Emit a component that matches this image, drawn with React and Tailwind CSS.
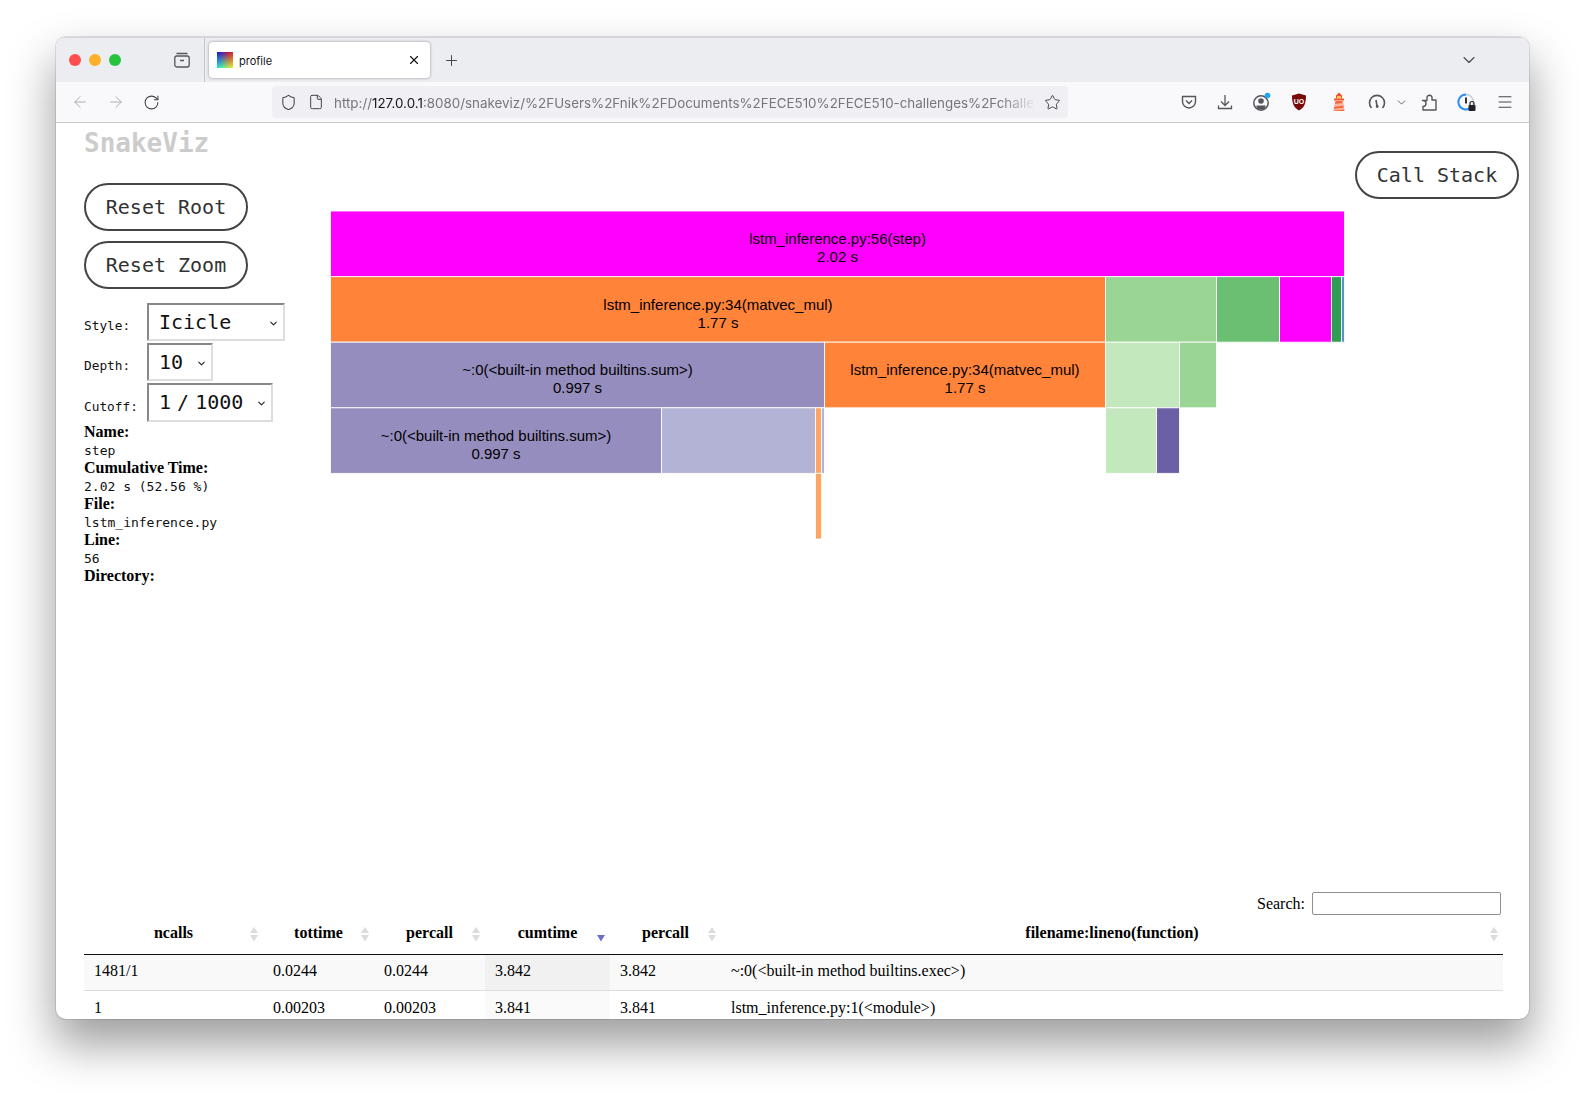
import React from 'react';
import {ArrowLeft, ArrowRight, ChevronDown, File, Menu, Plus, RotateCw, Shield, Star, X} from "lucide-react";

const rows = [
    {x: 330.5, w: 1014, y: 0, fill: "#ff00ff", label: "lstm_inference.py:56(step)", time: "2.02 s"},
    {x: 330.5, w: 775, y: 1, fill: "#ff8339", label: "lstm_inference.py:34(matvec_mul)", time: "1.77 s"},
    {x: 1105.5, w: 111, y: 1, fill: "#9bd595"},
    {x: 1216.5, w: 63, y: 1, fill: "#6bbf72"},
    {x: 1279.5, w: 52, y: 1, fill: "#ff00ff"},
    {x: 1331.5, w: 10, y: 1, fill: "#2f9e52"},
    {x: 1341.5, w: 3, y: 1, fill: "#5b93c8"},
    {x: 330.5, w: 494, y: 2, fill: "#958dbd", label: "~:0(<built-in method builtins.sum>)", time: "0.997 s"},
    {x: 824.5, w: 281, y: 2, fill: "#ff8339", label: "lstm_inference.py:34(matvec_mul)", time: "1.77 s"},
    {x: 1105.5, w: 74, y: 2, fill: "#c3e8bd"},
    {x: 1179.5, w: 37, y: 2, fill: "#9bd595"},
    {x: 330.5, w: 331, y: 3, fill: "#958dbd", label: "~:0(<built-in method builtins.sum>)", time: "0.997 s"},
    {x: 661.5, w: 154, y: 3, fill: "#b3b3d5"},
    {x: 815.5, w: 6, y: 3, fill: "#ffa564"},
    {x: 821.5, w: 3, y: 3, fill: "#b3b3d5"},
    {x: 1105.5, w: 51, y: 3, fill: "#c3e8bd"},
    {x: 1156.5, w: 23, y: 3, fill: "#6b60a6"},
    {x: 815.5, w: 6, y: 4, fill: "#ffa564"},
];

const columns = [
    {name: "ncalls", w: "w-[179px]"},
    {name: "tottime", w: "w-[111px]"},
    {name: "percall", w: "w-[111px]"},
    {name: "cumtime", w: "w-[125px]", active: true},
    {name: "percall", w: "w-[111px]"},
    {name: "filename:lineno(function)", w: "w-auto"},
];

const stats = [
    ["1481/1", "0.0244", "0.0244", "3.842", "3.842", "~:0(<built-in method builtins.exec>)"],
    ["1", "0.00203", "0.00203", "3.841", "3.841", "lstm_inference.py:1(<module>)"],
];

const info = [
    ["Name:", "step"],
    ["Cumulative Time:", "2.02 s (52.56 %)"],
    ["File:", "lstm_inference.py"],
    ["Line:", "56"],
    ["Directory:", ""],
];

const RowHeight = 65.6;

const Icicle = () => (
    <svg width="1016" height="332" className="block">
        {rows.map((r, i) => {
            const left = r.x - 330;
            const top = 1 + r.y * RowHeight;
            return (
                <g key={i}>
                    <rect x={left} y={top} width={r.w} height={RowHeight} fill={r.fill} stroke="#ffffff" strokeOpacity="0.85"/>
                    {r.label &&
                        <text x={left + r.w / 2} textAnchor="middle" fontSize="15" fill="#000" className="font-['Liberation_Sans',sans-serif]">
                            <tspan x={left + r.w / 2} y={top + 33}>{r.label}</tspan>
                            <tspan x={left + r.w / 2} y={top + 51}>{r.time}</tspan>
                        </text>}
                </g>
            );
        })}
    </svg>
);

const PillButton = ({children, className}) => (
    <button className={"block w-[164px] h-[48px] rounded-full border-2 border-[#444] text-[20px] text-[#333] bg-white " + className}>{children}</button>
);

const FakeSelect = ({label, value, className, textClass, mt}) => (
    <div className={"flex items-center " + mt}>
        <div className="w-[63px] mt-[8px] text-[12.8px] text-[#111]">{label}</div>
        <div className={"flex items-center justify-between pl-[10px] pr-[4px] border-2 border-t-[#888] border-l-[#888] border-r-[#ddd] border-b-[#ddd] text-[20px] text-[#111] pb-[1px] " + className}>
            <span className={textClass}>{value}</span>
            <ChevronDown size={11} strokeWidth={2.4} className="mt-[3px] text-[#222]"/>
        </div>
    </div>
);

const SortIcon = ({active}) => (
    <svg width="10" height="16" viewBox="0 0 10 16" className="justify-self-end mt-[2px]">
        {!active && <path d="M5 1 L9 7 L1 7 Z" fill="#dcdcdc"/>}
        <path d="M1 9 L9 9 L5 15.5 Z" fill={active ? "#6a6fd0" : "#dcdcdc"}/>
    </svg>
);

const Favicon = () => (
    <svg width="16" height="16" viewBox="0 0 16 16" className="shrink-0">
        <defs>
            <linearGradient id="favTop" x1="0" y1="0" x2="1" y2="0">
                <stop offset="0" stopColor="#1018e8"/>
                <stop offset="1" stopColor="#f01818"/>
            </linearGradient>
            <linearGradient id="favBottom" x1="0" y1="0" x2="1" y2="0">
                <stop offset="0" stopColor="#10f0e0"/>
                <stop offset="1" stopColor="#f0f020"/>
            </linearGradient>
            <linearGradient id="favFade" x1="0" y1="0" x2="0" y2="1">
                <stop offset="0" stopColor="#fff" stopOpacity="0"/>
                <stop offset="1" stopColor="#fff" stopOpacity="1"/>
            </linearGradient>
            <mask id="favMask">
                <rect width="16" height="16" fill="url(#favFade)"/>
            </mask>
        </defs>
        <rect width="16" height="16" fill="url(#favTop)"/>
        <rect width="16" height="16" fill="url(#favBottom)" mask="url(#favMask)"/>
    </svg>
);

const TabStrip = () => (
    <div className="flex shrink-0 h-[45px] items-center bg-[#ecedf1] border-t border-[#d4d4d6]">
        <div className="flex items-center gap-[8px] ml-[13px]">
            <span className="block w-[12px] h-[12px] rounded-full bg-[#fd4f4c]"/>
            <span className="block w-[12px] h-[12px] rounded-full bg-[#fdb02a]"/>
            <span className="block w-[12px] h-[12px] rounded-full bg-[#27c33f]"/>
        </div>
        <svg width="18" height="18" viewBox="0 0 18 18" fill="none" stroke="#55555c" strokeWidth="1.3" className="ml-[52px]">
            <path d="M3.5 2.5h11"/>
            <rect x="1.8" y="5" width="14.4" height="11" rx="2"/>
            <path d="M7 9.5h4"/>
        </svg>
        <div className="w-px h-[45px] bg-[#c6c6ca] ml-[13px]"/>
        <div className="flex items-center w-[221px] h-[36px] ml-[4px] pl-[8px] pr-[9px] bg-white rounded-[4px] shadow-[0_0_3px_rgba(0,0,0,0.4)]">
            <Favicon/>
            <span className="ml-[6px] mt-[2px] text-[11px] text-[#15141a] font-['Inter',sans-serif]">profile</span>
            <X size={14} strokeWidth={2} className="ml-auto text-[#15141a]"/>
        </div>
        <Plus size={17} strokeWidth={1.4} className="ml-[13px] text-[#45454c]"/>
        <ChevronDown size={20} strokeWidth={1.3} className="ml-auto mr-[50px] text-[#45454c]"/>
    </div>
);

const Toolbar = () => (
    <div className="flex shrink-0 h-[41px] items-center bg-[#f9f9fb] border-b border-[#cbcbcd] text-[#45454c]">
        <ArrowLeft size={18} strokeWidth={1.3} className="ml-[15px] text-[#adadb2]"/>
        <ArrowRight size={18} strokeWidth={1.3} className="ml-[18px] text-[#adadb2]"/>
        <RotateCw size={17} strokeWidth={1.5} className="ml-[18px]"/>
        <div className="flex items-center w-[796px] h-[32px] ml-[112px] rounded-[4px] bg-[#f0f0f4]">
            <Shield size={17} strokeWidth={1.5} className="ml-[8px]"/>
            <File size={16} strokeWidth={1.5} className="ml-[11px]"/>
            <div className="w-[702px] ml-[10px] mt-[2px] overflow-hidden whitespace-nowrap text-[13.38px] text-[#75757b] font-['Inter',sans-serif] [mask-image:linear-gradient(to_right,black_95%,transparent)]">
                http://<span className="text-[#15141a]">127.0.0.1</span>:8080/snakeviz/%2FUsers%2Fnik%2FDocuments%2FECE510%2FECE510-challenges%2Fchalle
            </div>
            <Star size={17} strokeWidth={1.4} className="ml-[8px]"/>
        </div>
        {/* pocket */}
        <svg width="16" height="16" viewBox="0 0 16 16" fill="none" stroke="#55555c" strokeWidth="1.4" className="ml-[113px]">
            <path d="M1.5 2.5h13v5a6.5 6.5 0 0 1-13 0z" strokeLinejoin="round"/>
            <path d="M5 6.5l3 3 3-3"/>
        </svg>
        {/* download */}
        <svg width="16" height="16" viewBox="0 0 16 16" fill="none" stroke="#55555c" strokeWidth="1.3" className="ml-[20px]">
            <path d="M8 1v10M4 7.5L8 11.5l4-4M1.5 11.5v3h13v-3"/>
        </svg>
        {/* account */}
        <svg width="20" height="20" viewBox="0 0 20 20" className="ml-[19px]">
            <circle cx="9" cy="11" r="7.2" fill="none" stroke="#55555c" strokeWidth="1.5"/>
            <circle cx="9" cy="9" r="2.8" fill="#55555c"/>
            <path d="M4.5 13.5h9v2.5a7 7 0 0 1-9 0z" fill="#55555c"/>
            <circle cx="15.5" cy="3.5" r="2.8" fill="#1fa5f0"/>
        </svg>
        {/* ublock */}
        <svg width="16" height="18" viewBox="0 0 16 18" className="ml-[19px]">
            <path d="M8 0.5L15 2.5C15 10 13.5 14.5 8 17.5C2.5 14.5 1 10 1 2.5z" fill="#7a0a0a"/>
            <text x="8" y="10.5" textAnchor="middle" fontSize="7" fontWeight="700" fill="#fff" className="font-['Liberation_Sans',sans-serif]">UO</text>
        </svg>
        {/* lighthouse */}
        <svg width="16" height="20" viewBox="0 0 16 20" className="ml-[24px]">
            <path d="M8 0.5l3 3v3H5v-3z" fill="#f0512e"/>
            <rect x="3" y="6.5" width="10" height="2" fill="#f0512e"/>
            <rect x="6" y="4" width="4" height="2.5" fill="#f6c545"/>
            <path d="M4.5 9h7l2 10h-11z" fill="#f46b42"/>
            <path d="M4 12l8.5-1 .4 2.5-9.4 1.2zM3 17l10-1.2.3 1.6L3 18.5z" fill="#fbb9a2"/>
        </svg>
        {/* gauge */}
        <svg width="18" height="18" viewBox="0 0 18 18" fill="none" stroke="#55555c" strokeWidth="1.6" className="ml-[21px]">
            <path d="M3.5 15A7.5 7.5 0 1 1 14.5 15"/>
            <path d="M8 7l1 6"/>
            <circle cx="9.2" cy="13.5" r="1.4" fill="#55555c" stroke="none"/>
        </svg>
        <ChevronDown size={13} strokeWidth={1.5} className="ml-[9px]"/>
        {/* extensions */}
        <svg width="16" height="18" viewBox="0 0 16 18" fill="none" stroke="#55555c" strokeWidth="1.4" strokeLinejoin="round" className="ml-[13px]">
            <path d="M1.5 7.5H6V5.5a2.6 2.6 0 1 1 5 0V7h4v10H2v-3.5a2 2 0 0 0 0-6z"/>
        </svg>
        {/* password manager status */}
        <svg width="20" height="20" viewBox="0 0 20 20" className="ml-[20px]">
            <circle cx="9" cy="10" r="7.5" fill="none" stroke="#c5ccd6" strokeWidth="1.4"/>
            <path d="M9 2.5a7.5 7.5 0 1 0 5 13" fill="none" stroke="#2f8df5" strokeWidth="2"/>
            <rect x="8" y="5.5" width="2" height="6" fill="#33333a"/>
            <rect x="11.5" y="13" width="7" height="6" rx="1" fill="#22222a"/>
            <path d="M13 13v-1.5a2 2 0 0 1 4 0V13" fill="none" stroke="#22222a" strokeWidth="1.2"/>
        </svg>
        <Menu size={18} strokeWidth={1.4} className="ml-[19px]"/>
    </div>
);

const App = () => {
    return (
        <div className="w-[1585px] h-[1093px] overflow-hidden bg-white pt-[37px] pl-[56px]">
            <div className="w-[1473px] h-[982px] rounded-[10px] overflow-hidden bg-white flex flex-col shadow-[0_0_0_1px_rgba(0,0,0,0.1),0_24px_46px_2px_rgba(0,0,0,0.38)]">
                <TabStrip/>
                <Toolbar/>

                <div className="flex h-[769px] shrink-0 pl-[28px] pr-[10px] font-['DejaVu_Sans_Mono',monospace]">
                    <div className="w-[246px] shrink-0">
                        <div className="h-[40px] leading-[40px] text-[26px] font-bold text-[#cccccc]">SnakeViz</div>
                        <PillButton className="mt-[20px]">Reset Root</PillButton>
                        <PillButton className="mt-[10px]">Reset Zoom</PillButton>
                        <FakeSelect label="Style:" value="Icicle" className="w-[138px] h-[38px]" mt="mt-[14px]"/>
                        <FakeSelect label="Depth:" value="10" className="w-[66px] h-[38px]" mt="mt-[2px]"/>
                        <FakeSelect label="Cutoff:" value="1 / 1000" textClass="[word-spacing:-6px]" className="w-[126px] h-[39px]" mt="mt-[2px]"/>
                        <div className="mt-px">
                            {info.map((item, i) => (
                                <div key={i}>
                                    <div className="leading-[17px] font-['Liberation_Serif',serif] font-bold text-[16px] text-black">{item[0]}</div>
                                    {item[1] && <div className="pt-[2px] leading-[17px] text-[13px] text-[#111]">{item[1]}</div>}
                                </div>
                            ))}
                        </div>
                    </div>
                    <div className="mt-[87px] shrink-0">
                        <Icicle/>
                    </div>
                    <PillButton className="mt-[28px] ml-[9px]">Call Stack</PillButton>
                </div>

                <div className="pl-[28px] pr-[26px] font-['Liberation_Serif',serif] text-[16px] text-black">
                    <div className="flex items-center justify-end h-[23px]">
                        <span>Search:</span>
                        <input className="ml-[7px] mr-[2px] w-[189px] h-[23px] border border-[#8f8f8f] rounded-[2px] bg-white"/>
                    </div>
                    <table className="w-[1419px] table-fixed border-collapse">
                        <thead>
                            <tr className="border-b border-[#111]">
                                {columns.map((c, i) => (
                                    <th key={i} className={"h-[39px] px-[4px] pb-[2px] font-bold " + c.w}>
                                        <div className="grid grid-cols-[1fr_auto_1fr] items-center">
                                            <span/>
                                            <span>{c.name}</span>
                                            <SortIcon active={c.active}/>
                                        </div>
                                    </th>
                                ))}
                            </tr>
                        </thead>
                        <tbody>
                            {stats.map((row, i) => (
                                <tr key={i} className={i === 0 ? "bg-[#f9f9f9] border-b border-[#dddddd]" : "bg-white"}>
                                    {row.map((cell, j) => (
                                        <td key={j} className={"h-[36px] px-[10px] " + (i === 0 ? "pb-[2px] " : "") + (j === 3 ? (i === 0 ? "bg-[#f1f1f1]" : "bg-[#fafafa]") : "")}>{cell}</td>
                                    ))}
                                </tr>
                            ))}
                        </tbody>
                    </table>
                </div>
            </div>
        </div>
    );
}

export default App;
